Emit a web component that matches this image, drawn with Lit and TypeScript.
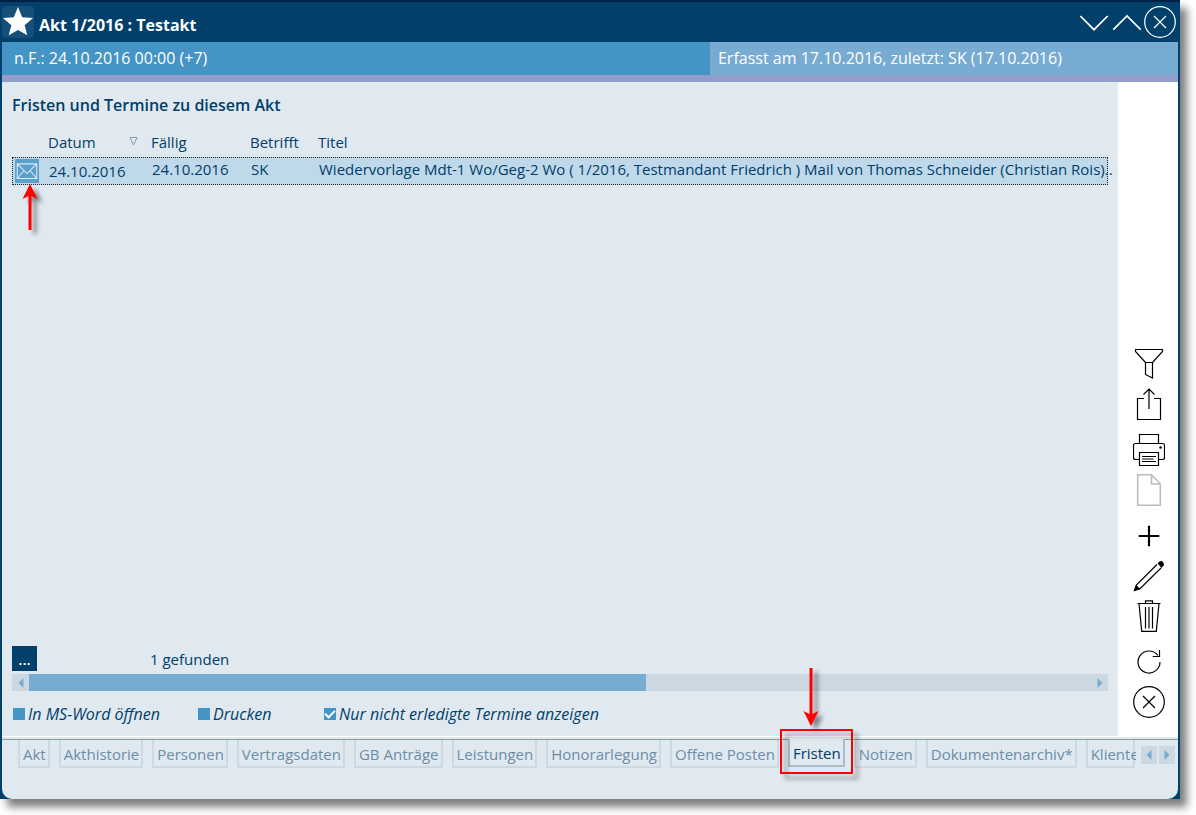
import { LitElement, html, css, svg } from "lit";
import { customElement, property, state } from "lit/decorators.js";
import { classMap } from "lit/directives/class-map.js";

const glyphs: Record<string, unknown> = {
  filter: svg`<path d="M2.5 1.5H29.5V3.5L19.5 14.5V30L12.5 26.5V14.5L2.5 3.5ZM12.5 14.5H19.5"/>`,
  share: svg`<path d="M11 10.5H4.5V31.5H27.5V10.5H21M16 21V1.5M10.5 6.5L16 1L21.5 6.5"/>`,
  print: svg`<path d="M6.5 9.5V.5H25.5V9.5M6.5 25.5H2.5Q.5 25.5 .5 23.5V11.5Q.5 9.5 2.5 9.5H29.5Q31.5 9.5 31.5 11.5V23.5Q31.5 25.5 29.5 25.5H25.5M6.5 18.5H25.5V31.5H6.5ZM9 22.5H23M9 25H20.5M9 27.5H23"/><circle cx="27.5" cy="13.5" r="1.2" fill="currentColor" stroke="none"/>`,
  page: svg`<path stroke-width="1.6" d="M4.7 .8H18.5L27.3 10V31.2H4.7ZM18.5 .8V10H27.3"/>`,
  add: svg`<path stroke-width="2.2" d="M16 5.7V26.3M5.7 16H26.3"/>`,
  edit: svg`<path d="M24 4.500L3.400 25L1.800 30.200L7 28.700L28 8"/><path d="M25.300 3.300Q26.500 1.500 28.500 1.500Q30.800 3 30.300 5L28.500 7ZM3.300 26L6.200 28.700L1.500 30.500Z" fill="currentColor"/>`,
  trash: svg`<path d="M4.500 3.500H27.500M12.500 3.500V.8H19.500V3.500M6 3.500L8.700 31.300H23.300L26 3.500M12.500 7V28.500M16 7V28.500M19.500 7V28.500"/>`,
  reload: svg`<path d="M27 16A11 11 0 1 1 24.800 9.400M26.500 4V10.500H19.700"/>`,
  close: svg`<circle cx="16" cy="16" r="15.300"/><path d="M10 10L22 22M22 10L10 22"/>`,
  down: svg`<path stroke-width="1.700" d="M2.300 10L16 23.700L29.700 10"/>`,
  up: svg`<path stroke-width="1.700" d="M2.300 23.700L16 10L29.700 23.700"/>`,
  star: svg`<path fill="currentColor" stroke="none" d="M16 1L20.200 11.200L31 12L22.600 19.200L25.300 29.300L16 24L6.700 29.300L9.400 19.200L1 12L11.800 11.200Z"/>`,
  mail: svg`<path stroke-width="1.4" d="M3 6.500H29V26H3ZM3 6.500L16 19.500L29 6.500M3 26L11.500 16M29 26L20.500 16"/>`,
};

@customElement("line-icon")
class LineIcon extends LitElement {
  @property() name = "close";

  static styles = css`
    :host { display: block; }
    svg { display: block; width: 100%; height: 100%; }
  `;

  render() {
    return html`<svg viewBox="0 0 32 32" fill="none" stroke="currentColor" stroke-width="1.2" aria-hidden="true">${glyphs[this.name]}</svg>`;
  }
}

interface Tool {
  icon: string;
  label: string;
  disabled?: boolean;
}

const toolGroups: Tool[][] = [
  [{ icon: "filter", label: "Filtern" }, { icon: "share", label: "Exportieren" }],
  [{ icon: "print", label: "Drucken" }, { icon: "page", label: "Dokument", disabled: true }],
  [{ icon: "add", label: "Neu" }, { icon: "edit", label: "Bearbeiten" }, { icon: "trash", label: "Löschen" }],
  [{ icon: "reload", label: "Aktualisieren" }, { icon: "close", label: "Schließen" }],
];

const tabs = [
  "Akt", "Akthistorie", "Personen", "Vertragsdaten", "GB Anträge", "Leistungen",
  "Honorarlegung", "Offene Posten", "Fristen", "Notizen", "Dokumentenarchiv*", "Klienten",
];

const options = [
  { id: "word", label: "In MS-Word öffnen", checked: false },
  { id: "druck", label: "Drucken", checked: false },
  { id: "offen", label: "Nur nicht erledigte Termine anzeigen", checked: true },
];

@customElement("app-root")
class AppRoot extends LitElement {
  @state() private active = "Fristen";

  static styles = css`
    :host {
      display: block;
      box-sizing: border-box;
      height: 100vh;
      padding: 0 16px 16px 0;
      background: #fff;
      color: #00406a;
      font: 15px/20px "Open Sans", "Noto Sans", sans-serif;
      overflow: hidden;
    }
    * { box-sizing: border-box; }
    button { font: inherit; color: inherit; background: none; border: 0; padding: 0; margin: 0; cursor: pointer; }
    h1, h2 { margin: 0; font-size: 16px; font-weight: 600; }
    h1 { font-weight: 700; }

    .window {
      display: flex;
      flex-direction: column;
      height: 100%;
      padding: 0 2px;
      border-top: 2px solid #00204a;
      background: #00406a;
      box-shadow: 7px 8px 8px rgba(0, 0, 0, 0.5);
    }
    .titlebar { display: flex; align-items: center; height: 40px; color: #fff; }
    .titlebar h1 { flex: 1; padding: 6px 0 0 5px; }
    .star { width: 32px; height: 32px; border-radius: 4px; background: #14507a; }
    .controls { display: flex; gap: 1px; padding-right: 2px; }
    .controls line-icon { width: 32px; height: 32px; }

    .info { display: flex; height: 33px; font-size: 16px; line-height: 33px; color: #fff; background: #4494c5; }
    .info-due { flex: 1; padding-left: 12px; }
    .info-log { width: 39.8%; padding-left: 8px; background: #78abd1; }
    .stripe { height: 7px; background: #919ecb; }

    .body { flex: 1; display: flex; min-height: 0; background: #e0e8f0; }
    .main { flex: 1; min-width: 0; display: flex; flex-direction: column; padding: 13px 10px 0; }
    .list { flex: 1; }
    table { width: 100%; table-layout: fixed; border-collapse: collapse; margin-top: 17px; }
    th { height: 25px; padding: 0; font-weight: 400; text-align: left; vertical-align: top; }
    td { height: 28px; padding: 2px 0 0 1px; vertical-align: top; white-space: nowrap; }
    tbody tr { background: #bfd9eb; outline: 1px dotted #222; outline-offset: -1px; }
    .col-icon { width: 36px; }
    .col-date { width: 103px; }
    .col-due { width: 99px; }
    .col-who { width: 68px; }
    .sortable { display: flex; justify-content: space-between; padding-right: 13px; }
    .sortable svg { width: 9px; height: 9px; margin-top: 5px; }
    .cell-icon { padding: 2px 0 0 3px; }
    .cell-date { padding-top: 4px; }
    .mail { position: relative; width: 24px; height: 24px; color: #d8ecf8; background: #5b9fcb; }
    .mail line-icon { width: 24px; height: 24px; }

    .status { display: grid; grid-template-columns: 138px 1fr; align-items: center; }
    .more { width: 25px; height: 25px; color: #fff; background: #00406a; font-weight: 600; }
    .scroll { display: flex; height: 17px; margin-top: 3px; background: #cbd8e2; }
    .scroll button, .pager button { display: grid; place-items: center; width: 17px; color: #78abd1; }
    .scroll svg, .pager svg { width: 6px; height: 10px; }
    .track { flex: 1; }
    .thumb { height: 100%; background: #78abd1; }

    .options { display: grid; grid-template-columns: 185px 126px 1fr; padding: 13px 0 12px 1px; font-size: 16px; font-style: italic; }
    .option { display: flex; align-items: center; gap: 3px; }
    .option input { appearance: none; width: 12px; height: 12px; margin: 0; background: #4494c5; display: grid; place-items: center; }
    .option input:checked::before { content: ""; width: 8px; height: 4px; border: solid #fff; border-width: 0 0 2px 2px; transform: translateY(-1px) rotate(-45deg); }

    .tools { width: 60px; display: flex; flex-direction: column; justify-content: flex-end; align-items: center; gap: 14px; padding: 0 0 18px 2px; background: #fff; color: #000; }
    .tool-group { display: grid; gap: 8px; }
    .tool-group line-icon { width: 32px; height: 32px; }
    .tool-group button:disabled { color: #bdbdbd; }

    .footer { display: flex; height: 63px; border-top: 1px solid #fff; border-radius: 0 0 10px 10px; background: #e0e8f0; }
    .footer-row { flex: 1; min-width: 0; display: flex; align-items: flex-start; margin-top: 2px; border-top: 1px solid #869ba2; }
    .tabs { flex: 1; min-width: 0; display: flex; gap: 9px; padding: 0 1px 0 16px; overflow-x: clip; }
    .tab { flex: none; position: relative; height: 28px; padding: 0 2px 0 3px; line-height: 28px; text-align: left; color: #6b8ea8; border: solid #ccd9e3; border-width: 0 2px 2px; white-space: nowrap; }
    .tab:last-child { flex: 0 1 auto; min-width: 0; }
    .tab.active { height: 28px; margin-top: -1px; z-index: 1; color: #00406a; background: #e0e8f0; border-color: #a9bdcd; }
    .pager { display: flex; gap: 2px; padding: 6px 3px 0 5px; }
    .pager button { width: 16px; height: 18px; background: #ccd9e3; }

    .mark { position: absolute; inset: -10px -10px -9px; border: 2px solid #f00; filter: drop-shadow(5px 5px 2px rgba(0, 0, 0, 0.4)); pointer-events: none; }
    .arrow { position: absolute; width: 16px; fill: #f00; filter: drop-shadow(5px 4px 2px rgba(0, 0, 0, 0.45)); pointer-events: none; overflow: visible; }
    .arrow-up { left: 7px; top: 25px; height: 46px; }
    .arrow-down { left: 13px; top: -71px; height: 58px; }
  `;

  private arrowhead(dir: "left" | "right") {
    return html`<svg viewBox="0 0 6 10" fill="currentColor" aria-hidden="true"><path d=${dir === "left" ? "M5.5 0V10L.5 5Z" : "M.5 0V10L5.5 5Z"}/></svg>`;
  }

  private renderTable() {
    return html`<table>
      <colgroup><col class="col-icon"><col class="col-date"><col class="col-due"><col class="col-who"><col></colgroup>
      <thead>
        <tr>
          <th></th>
          <th><span class="sortable">Datum
            <svg viewBox="0 0 9 9" fill="none" stroke="#8c9aa5" aria-hidden="true"><path d="M1 .5H8L4.5 8Z"/></svg></span></th>
          <th>Fällig</th><th>Betrifft</th><th>Titel</th>
        </tr>
      </thead>
      <tbody>
        <tr>
          <td class="cell-icon"><div class="mail"><line-icon name="mail"></line-icon>
            <svg class="arrow arrow-up" viewBox="0 0 16 46" aria-hidden="true"><path d="M8 0L15.5 15L9.5 12V46H6.5V12L.5 15Z"/></svg></div></td>
          <td class="cell-date">24.10.2016</td>
          <td>24.10.2016</td>
          <td>SK</td>
          <td>Wiedervorlage Mdt-1 Wo/Geg-2 Wo ( 1/2016, Testmandant Friedrich ) Mail von Thomas Schneider (Christian Rois)..</td>
        </tr>
      </tbody>
    </table>`;
  }

  private renderTab(name: string) {
    const active = name === this.active;
    return html`<button role="tab" aria-selected=${active ? "true" : "false"} class=${classMap({ tab: true, active })}
      @click=${() => (this.active = name)}>${name}${active
        ? html`<span class="mark"></span><svg class="arrow arrow-down" viewBox="0 0 16 58" aria-hidden="true"><path d="M8 58L.5 43L6.5 46V0H9.5V46L15.5 43Z"/></svg>`
        : null}</button>`;
  }

  render() {
    return html`<div class="window">
      <header class="titlebar">
        <button class="star" aria-label="Favorit"><line-icon name="star"></line-icon></button>
        <h1>Akt 1/2016 : Testakt</h1>
        <div class="controls">
          <button aria-label="Nächster"><line-icon name="down"></line-icon></button>
          <button aria-label="Voriger"><line-icon name="up"></line-icon></button>
          <button aria-label="Schließen"><line-icon name="close"></line-icon></button>
        </div>
      </header>
      <div class="info">
        <div class="info-due">n.F.: 24.10.2016 00:00 (+7)</div>
        <div class="info-log">Erfasst am 17.10.2016, zuletzt: SK (17.10.2016)</div>
      </div>
      <div class="stripe"></div>
      <div class="body">
        <main class="main">
          <h2>Fristen und Termine zu diesem Akt</h2>
          <div class="list">${this.renderTable()}</div>
          <div class="status">
            <button class="more">...</button>
            <span>1 gefunden</span>
          </div>
          <div class="scroll">
            <button aria-label="Nach links">${this.arrowhead("left")}</button>
            <div class="track"><div class="thumb" style="width: 58.1%"></div></div>
            <button aria-label="Nach rechts">${this.arrowhead("right")}</button>
          </div>
          <div class="options">
            ${options.map((o) => html`<div class="option">
              <input type="checkbox" id=${o.id} .checked=${o.checked}><label for=${o.id}>${o.label}</label></div>`)}
          </div>
        </main>
        <aside class="tools">
          ${toolGroups.map((group) => html`<div class="tool-group">
            ${group.map((t) => html`<button aria-label=${t.label} ?disabled=${t.disabled}><line-icon name=${t.icon}></line-icon></button>`)}
          </div>`)}
        </aside>
      </div>
      <footer class="footer">
        <div class="footer-row">
          <div class="tabs" role="tablist">${tabs.map((t) => this.renderTab(t))}</div>
          <div class="pager">
            <button aria-label="Tabs zurück">${this.arrowhead("left")}</button>
            <button aria-label="Tabs weiter">${this.arrowhead("right")}</button>
          </div>
        </div>
      </footer>
    </div>`;
  }
}
